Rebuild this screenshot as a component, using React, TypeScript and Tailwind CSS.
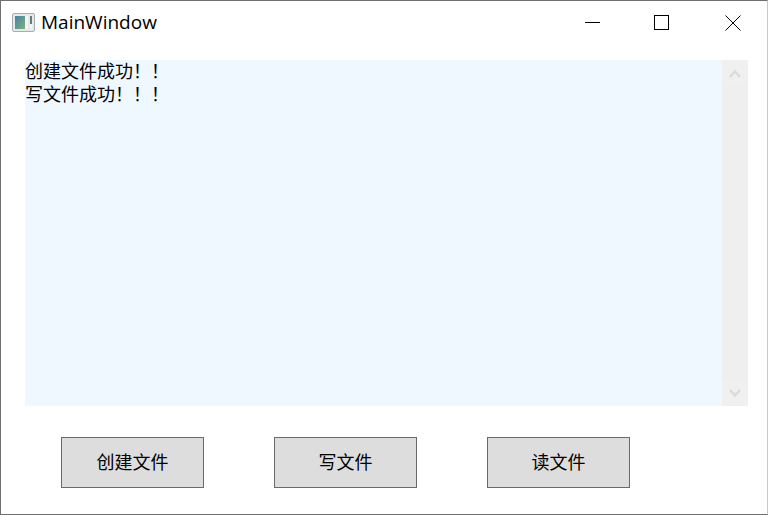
const CJK = "font-['Microsoft_YaHei','Noto_Sans_CJK_SC',sans-serif]";

function AppIcon() {
  return (
    <svg width="24" height="20" viewBox="0 0 24 20" className="shrink-0">
      <defs>
        <linearGradient id="pane" x1="0" y1="0" x2="1" y2="1">
          <stop offset="0" stopColor="#3f86a8" />
          <stop offset="1" stopColor="#82b07a" />
        </linearGradient>
      </defs>
      <rect x="0.5" y="0.5" width="22" height="18" rx="1.5" fill="#e6e9ec" stroke="#a9adb2" />
      <rect x="3" y="3" width="10" height="13" fill="url(#pane)" />
      <rect x="13" y="3" width="3" height="13" fill="#f4f6f6" />
      <rect x="18" y="3" width="2" height="8" fill="#5d7f78" />
      <rect x="18" y="11" width="2" height="5" fill="#f4f6f6" />
    </svg>
  );
}

function TitleBar() {
  return (
    <div className="flex h-[43px] shrink-0 items-center pl-[11px] pr-[26px]">
      <AppIcon />
      <span className="ml-[5px] -mt-[1px] font-['Open_Sans',sans-serif] text-[19px] leading-none text-black">MainWindow</span>
      <div className="ml-auto flex items-center">
        <svg width="15" height="15" viewBox="0 0 15 15">
          <path d="M0 7.5H15" stroke="#000" strokeWidth="1" />
        </svg>
        <svg width="15" height="15" viewBox="0 0 15 15" className="ml-[54px]">
          <rect x="0.5" y="0.5" width="14" height="14" fill="none" stroke="#000" />
        </svg>
        <svg width="16" height="16" viewBox="0 0 16 16" className="ml-[56px]">
          <path d="M0.5 0.5L15.5 15.5M15.5 0.5L0.5 15.5" stroke="#000" strokeWidth="1" />
        </svg>
      </div>
    </div>
  );
}

function ScrollBar() {
  return (
    <div className="flex w-[26px] shrink-0 flex-col justify-between bg-[#efefef]">
      <div className="flex h-[26px] items-center justify-center bg-[#f0f0f0]">
        <svg width="12" height="9" viewBox="0 0 12 9">
          <path d="M1 8L6 2.5L11 8" fill="none" stroke="#dadada" strokeWidth="2.4" />
        </svg>
      </div>
      <div className="flex h-[26px] items-center justify-center bg-[#f0f0f0]">
        <svg width="12" height="9" viewBox="0 0 12 9">
          <path d="M1 1L6 6.5L11 1" fill="none" stroke="#dadada" strokeWidth="2.4" />
        </svg>
      </div>
    </div>
  );
}

function FileButton({ label }: { label: string }) {
  return (
    <button className={`h-[51px] w-[143px] border border-[#6a6a6a] bg-[#dddddd] pb-[2px] text-[18px] text-black ${CJK}`}>
      {label}
    </button>
  );
}

export default function App() {
  return (
    <div className="flex h-[515px] w-[768px] flex-col border border-r-[#c8c8c8] border-[#6f6f6f] bg-white">
      <TitleBar />
      <div className="ml-[24px] mr-[19px] mt-[16px] flex h-[346px]">
        <div className={`flex-1 bg-[#eff7ff] text-[18px] leading-[23px] text-black ${CJK}`}>
          <div className="-mt-[1px]">创建文件成功！！</div>
          <div>写文件成功！！！</div>
        </div>
        <ScrollBar />
      </div>
      <div className="ml-[60px] mt-[31px] flex gap-[70px]">
        <FileButton label="创建文件" />
        <FileButton label="写文件" />
        <FileButton label="读文件" />
      </div>
    </div>
  );
}
